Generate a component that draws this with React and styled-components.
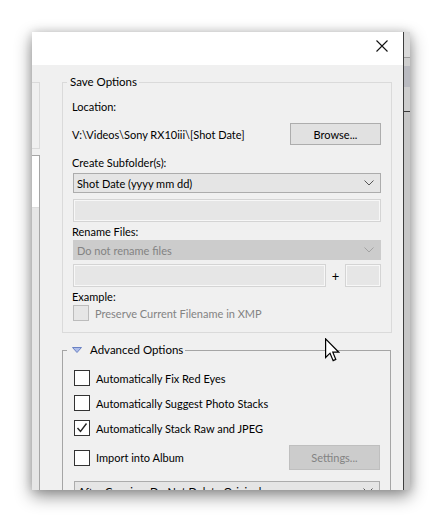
import React from 'react';
import styled, { createGlobalStyle } from 'styled-components';

const Global = createGlobalStyle`
  html, body { margin: 0; padding: 0; background: #ffffff; }
  body {
    font-family: Lato, "Noto Sans", sans-serif;
    font-size: 11px;
    color: #000;
  }
  * { box-sizing: border-box; }
`;

const Stage = styled.div`
  position: relative;
  width: 442px;
  height: 523px;
  padding: 32px 0 0 32px;
  overflow: hidden;
`;

const Frame = styled.div`
  display: flex;
  width: 378px;
  height: 458px;
  box-shadow: 0 6px 16px rgba(0, 0, 0, 0.45), 0 0 9px rgba(0, 0, 0, 0.14);
`;

const Dialog = styled.div`
  width: 371px;
  display: flex;
  flex-direction: column;
  overflow: hidden;
`;

const TitleBar = styled.div`
  height: 33px;
  flex-shrink: 0;
  background: #fff;
  display: flex;
  justify-content: flex-end;
  align-items: flex-start;
  padding: 8px 15px 0 0;
`;

const CloseButton = styled.div`
  width: 12px;
  height: 12px;
  display: flex;
`;

const Body = styled.div`
  flex: 1;
  display: flex;
  background: #f0f0f0;
  overflow: hidden;
`;

/* edge of the list panel that sits behind the options column */
const Stub = styled.div`
  width: 8px;
  flex-shrink: 0;
  display: flex;
  flex-direction: column;
  gap: 6px;
  padding-top: 17px;
`;

const StubCard = styled.div`
  height: 67px;
  border: 1px solid #dadada;
  border-left: none;
`;

const StubList = styled.div`
  flex: 1;
  border-top: 1px solid #a6a6a6;
  border-right: 1px solid #a6a6a6;
  background: linear-gradient(#ffffff 0 51px, #dcdcdc 51px 52px, #e6e6e6 52px);
`;

const Column = styled.div`
  flex: 1;
  min-width: 0;
  display: flex;
  flex-direction: column;
  gap: 10px;
  padding: 10px 11px 0 22px;
`;

const Group = styled.fieldset`
  margin: 0 ${p => (p.$strong ? 1 : 0)}px 0 0;
  min-width: 0;
  flex-shrink: 0;
  border: 1px solid ${p => (p.$strong ? '#a5a5a5' : '#dadada')};
  padding: 0 10px ${p => p.$padBottom}px ${p => p.$padLeft}px;
`;

const Legend = styled.legend`
  display: flex;
  align-items: center;
  gap: 8px;
  line-height: 14px;
  font-size: 11.5px;
  margin-left: ${p => p.$shift}px;
  padding: 0 2px 0 ${p => p.$lead}px;
`;

const Stack = styled.div`
  display: flex;
  flex-direction: column;
  gap: ${p => p.$gap || 0}px;
  padding-top: ${p => p.$top || 0}px;
`;

const Label = styled.div`
  line-height: 16px;
  margin: ${p => p.$mt || 0}px 0 0 -1px;
  color: ${p => (p.$dim ? '#838383' : '#000')};
  white-space: nowrap;
`;

const LocationRow = styled.div`
  height: 22px;
  margin-top: 8px;
  display: flex;
  align-items: center;
  justify-content: space-between;
`;

const PathText = styled.span`
  margin-left: -1px;
  white-space: nowrap;
`;

const Button = styled.div`
  width: 91px;
  height: ${p => p.$h}px;
  display: flex;
  align-items: center;
  justify-content: center;
  background: ${p => (p.$disabled ? '#cccccc' : '#e1e1e1')};
  border: 1px solid ${p => (p.$disabled ? '#bfbfbf' : '#adadad')};
  color: ${p => (p.$disabled ? '#838383' : '#000')};
  flex-shrink: 0;
`;

const Select = styled.div`
  height: 20px;
  flex-shrink: 0;
  margin-top: ${p => p.$mt || 0}px;
  display: flex;
  align-items: center;
  justify-content: space-between;
  padding: 0 6px 0 3px;
  background: ${p => (p.$disabled ? '#cccccc' : '#e5e5e5')};
  border: 1px solid ${p => (p.$disabled ? '#cccccc' : '#acacac')};
  color: ${p => (p.$disabled ? '#838383' : '#000')};
  white-space: nowrap;
  overflow: hidden;
`;

const TextBox = styled.div`
  height: 23px;
  flex-shrink: 0;
  margin-top: ${p => p.$mt || 0}px;
  width: ${p => (p.$w ? `${p.$w}px` : 'auto')};
  flex-grow: ${p => (p.$fill ? 1 : 0)};
  background: #e6e6e6;
  border: 1px solid #d4d4d4;
  box-shadow: inset 0 0 0 1px #f7f7f7;
`;

const PairRow = styled.div`
  display: flex;
  align-items: center;
  gap: 5px;
  margin-top: 4px;
`;

const Plus = styled.span`
  width: 9px;
  text-align: center;
  font-size: 13px;
`;

const CheckRow = styled.div`
  display: flex;
  align-items: center;
  justify-content: space-between;
  flex-shrink: 0;
  height: ${p => p.$h || 16}px;
  margin-top: ${p => p.$mt || 0}px;
`;

const CheckLabel = styled.label`
  display: flex;
  align-items: center;
  gap: 6px;
  color: ${p => (p.$dim ? '#838383' : '#000')};
  white-space: nowrap;
`;

const Box = styled.span`
  width: 16px;
  height: 16px;
  flex-shrink: 0;
  display: flex;
  align-items: center;
  justify-content: center;
  background: ${p => (p.$disabled ? '#e6e6e6' : '#ffffff')};
  border: 1px solid ${p => (p.$disabled ? '#bcbcbc' : '#333333')};
`;

const SideStrip = styled.div`
  width: 7px;
  flex-shrink: 0;
  border-left: 1px solid #3d3d3d;
  display: flex;
  flex-direction: column;
  background: #c9c9c9;
  overflow: hidden;
`;

const StripCell = styled.div`
  height: ${p => p.$h}px;
  flex-shrink: 0;
  background: ${p => p.$bg};
  border-bottom: 1px solid ${p => p.$line || 'transparent'};
`;

const Pointer = styled.svg`
  position: absolute;
  left: 325px;
  top: 338px;
`;

function Chevron({ dim }) {
  return (
    <svg width="10" height="6" viewBox="0 0 10 6">
      <polyline points="0.5,0.5 5,5 9.5,0.5" fill="none" stroke={dim ? '#a3a3a3' : '#555'} strokeWidth="1" />
    </svg>
  );
}

function Check({ checked, disabled, children }) {
  return (
    <CheckLabel $dim={disabled}>
      <Box $disabled={disabled}>
        {checked && (
          <svg width="12" height="12" viewBox="0 0 12 12">
            <polyline points="1.5,6 4.5,9.5 10.5,1.5" fill="none" stroke="#222" strokeWidth="1.4" />
          </svg>
        )}
      </Box>
      {children}
    </CheckLabel>
  );
}

export default function App() {
  return (
    <Stage>
      <Global />
      <Frame>
        <Dialog>
          <TitleBar>
            <CloseButton>
              <svg width="12" height="12" viewBox="0 0 12 12">
                <path d="M0.5 0.5 L11.5 11.5 M11.5 0.5 L0.5 11.5" stroke="#111" strokeWidth="1.1" />
              </svg>
            </CloseButton>
          </TitleBar>
          <Body>
            <Stub>
              <StubCard />
              <StubList />
            </Stub>
            <Column>
              <Group $padLeft={10} $padBottom={11}>
                <Legend $shift={-6} $lead={3}>Save Options</Legend>
                <Stack>
                  <Label $mt={10}>Location:</Label>
                  <LocationRow>
                    <PathText>V:\Videos\Sony RX10iii\[Shot Date]</PathText>
                    <Button $h={22}>Browse...</Button>
                  </LocationRow>
                  <Label $mt={10}>Create Subfolder(s):</Label>
                  <Select $mt={2}>
                    <span>Shot Date (yyyy mm dd)</span>
                    <Chevron />
                  </Select>
                  <TextBox $mt={6} />
                  <Label $mt={2}>Rename Files:</Label>
                  <Select $disabled>
                    <span>Do not rename files</span>
                    <Chevron dim />
                  </Select>
                  <PairRow>
                    <TextBox $fill />
                    <Plus>+</Plus>
                    <TextBox $w={36} />
                  </PairRow>
                  <Label $mt={2}>Example:</Label>
                  <CheckRow>
                    <Check disabled>Preserve Current Filename in XMP</Check>
                  </CheckRow>
                </Stack>
              </Group>

              <Group $strong $padLeft={11} $padBottom={12}>
                <Legend $shift={-7} $lead={5}>
                  <svg width="10" height="6" viewBox="0 0 10 6">
                    <polygon points="0.5,0.5 9.5,0.5 5,5.5" fill="#aebde9" stroke="#6b82c4" strokeWidth="1" />
                  </svg>
                  Advanced Options
                </Legend>
                <Stack $top={13} $gap={9}>
                  <CheckRow>
                    <Check>Automatically Fix Red Eyes</Check>
                  </CheckRow>
                  <CheckRow>
                    <Check>Automatically Suggest Photo Stacks</Check>
                  </CheckRow>
                  <CheckRow>
                    <Check checked>Automatically Stack Raw and JPEG</Check>
                  </CheckRow>
                  <CheckRow $h={25}>
                    <Check>Import into Album</Check>
                    <Button $h={25} $disabled>Settings...</Button>
                  </CheckRow>
                  <Select $mt={2}>
                    <span>After Copying, Do Not Delete Originals</span>
                    <Chevron />
                  </Select>
                </Stack>
              </Group>
            </Column>
          </Body>
        </Dialog>
        <SideStrip>
          <StripCell $h={26} $bg="#dadada" $line="#9c9c9c" />
          <StripCell $h={8} $bg="#cfcfcf" />
          <StripCell $h={21} $bg="#b9bac0" />
          <StripCell $h={25} $bg="#cdcdcd" $line="#3a3a3a" />
          <StripCell $h={400} $bg="#c6c6c6" />
        </SideStrip>
      </Frame>
      <Pointer width="15" height="24" viewBox="0 0 12.5 19.5">
        <path
          d="M0.5 0.5 L0.5 16 L4.2 12.4 L6.8 18.6 L9 17.6 L6.5 11.6 L11.5 11.6 Z"
          fill="#fff"
          stroke="#000"
          strokeWidth="1"
          strokeLinejoin="miter"
        />
      </Pointer>
    </Stage>
  );
}
